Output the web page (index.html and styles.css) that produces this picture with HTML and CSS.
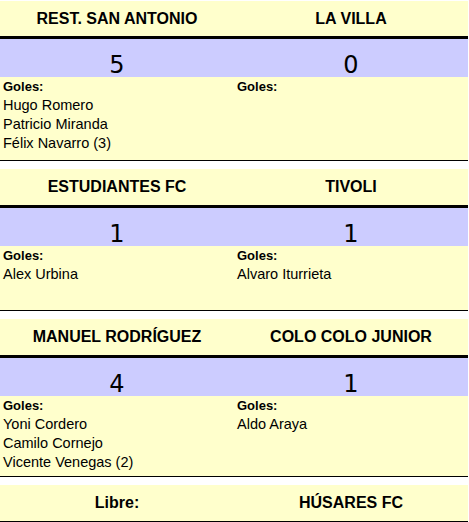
FILE: index.html
```html
<!DOCTYPE html>
<html lang="es">
<head>
<meta charset="utf-8">
<title>Resultados</title>
<link rel="stylesheet" href="styles.css">
</head>
<body>
<div class="fixture">
  <section class="match m1">
    <div class="teams"><div class="team">REST. SAN ANTONIO</div><div class="team">LA VILLA</div></div>
    <div class="scores"><div class="score">5</div><div class="score">0</div></div>
    <div class="goals">
      <div class="scorers"><div class="label">Goles:</div><div class="name">Hugo Romero</div><div class="name">Patricio Miranda</div><div class="name">Félix Navarro (3)</div></div>
      <div class="scorers"><div class="label">Goles:</div></div>
    </div>
  </section>
  <section class="match m2">
    <div class="teams"><div class="team">ESTUDIANTES FC</div><div class="team">TIVOLI</div></div>
    <div class="scores"><div class="score">1</div><div class="score">1</div></div>
    <div class="goals">
      <div class="scorers"><div class="label">Goles:</div><div class="name">Alex Urbina</div></div>
      <div class="scorers"><div class="label">Goles:</div><div class="name">Alvaro Iturrieta</div></div>
    </div>
  </section>
  <section class="match m3">
    <div class="teams"><div class="team">MANUEL RODRÍGUEZ</div><div class="team">COLO COLO JUNIOR</div></div>
    <div class="scores"><div class="score">4</div><div class="score">1</div></div>
    <div class="goals">
      <div class="scorers"><div class="label">Goles:</div><div class="name">Yoni Cordero</div><div class="name">Camilo Cornejo</div><div class="name">Vicente Venegas (2)</div></div>
      <div class="scorers"><div class="label">Goles:</div><div class="name">Aldo Araya</div></div>
    </div>
  </section>
  <section class="match bye">
    <div class="teams"><div class="team">Libre:</div><div class="team">HÚSARES FC</div></div>
  </section>
</div>
</body>
</html>
```
FILE: styles.css
```css
html, body {
  margin: 0;
  padding: 0;
  background: #ffffff;
}
body {
  font-family: "Liberation Sans", Arial, sans-serif;
  color: #000;
}
.fixture {
  width: 468px;
  padding-top: 1px;
  display: flex;
  flex-direction: column;
  gap: 8px;
}
.match {
  display: flex;
  flex-direction: column;
}
.teams, .scores, .goals {
  display: grid;
  grid-template-columns: 234px 234px;
}
.teams {
  background: #ffffcc;
  border-bottom: 3px solid #000;
}
.team {
  height: 35px;
  line-height: 35px;
  text-align: center;
  font-weight: bold;
  font-size: 16px;
}
.m2 .team, .m3 .team, .bye .team {
  height: 36px;
  line-height: 36px;
}
.scores {
  background: #ccccff;
}
.score {
  box-sizing: border-box;
  height: 38px;
  padding-top: 12px;
  line-height: 28px;
  text-align: center;
  font-family: Tahoma, "DejaVu Sans", sans-serif;
  font-size: 24px;
}
.goals {
  background: #ffffcc;
  border-bottom: 1px solid #000;
  box-sizing: border-box;
}
.m1 .goals { height: 84px; }
.m2 .goals { height: 65px; }
.m3 .goals { height: 81px; }
.scorers {
  padding: 0 0 0 3px;
}
.label {
  height: 19px;
  line-height: 19px;
  font-size: 13px;
  font-weight: bold;
}
.name {
  height: 19px;
  line-height: 19px;
  font-size: 14.5px;
}
```
